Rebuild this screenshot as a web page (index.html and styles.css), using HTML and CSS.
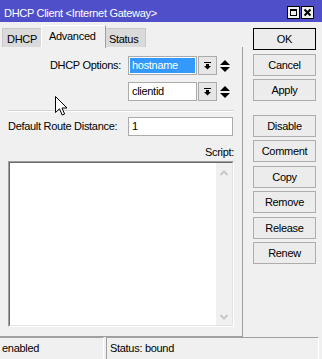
FILE: index.html
```html
<!DOCTYPE html>
<html lang="en">
<head>
<meta charset="UTF-8" />
<meta name="viewport" content="width=device-width, initial-scale=1" />
<title>DHCP Client</title>
<link rel="stylesheet" href="styles.css">
</head>
<body>
  <div class="window">
    <!-- Title bar -->
    <div class="titlebar">
      <span class="title">DHCP Client &lt;Internet Gateway&gt;</span>
      <div class="title-buttons">
        <span class="tbtn">
          <svg width="11" height="11" viewBox="0 0 11 11"><rect x="2.5" y="2.5" width="6" height="6" fill="none" stroke="#000"/><rect x="2" y="2" width="7" height="2" fill="#000"/></svg>
        </span>
        <span class="tbtn">
          <svg width="11" height="11" viewBox="0 0 11 11"><path d="M2.5 2.5 L8.5 8.5 M8.5 2.5 L2.5 8.5" stroke="#000" stroke-width="2"/></svg>
        </span>
      </div>
    </div>

    <div class="main">
      <div class="left">
        <!-- Tabs -->
        <div class="tabs">
          <div class="tab tab-dhcp">DHCP</div>
          <div class="tab tab-advanced active">Advanced</div>
          <div class="tab tab-status">Status</div>
        </div>

        <!-- Advanced tab contents -->
        <div class="panel">
          <div class="option-row">
            <span class="label">DHCP Options:</span>
            <div class="input option-input"><span class="selected">hostname</span></div>
            <span class="drop-btn">
              <svg width="7" height="8" viewBox="0 0 7 8"><rect x="0" y="0" width="7" height="1" fill="#000"/><rect x="2" y="2" width="3" height="2" fill="#000"/><polygon points="0,4 7,4 3.5,7.5" fill="#000"/></svg>
            </span>
            <span class="updown">
              <svg width="10" height="14" viewBox="0 0 10 14"><polygon points="0,6 5,1 10,6" fill="#000"/><polygon points="0,8 10,8 5,13" fill="#000"/></svg>
            </span>
          </div>

          <div class="option-row second">
            <span class="label"></span>
            <div class="input option-input"><span class="value">clientid</span></div>
            <span class="drop-btn">
              <svg width="7" height="8" viewBox="0 0 7 8"><rect x="0" y="0" width="7" height="1" fill="#000"/><rect x="2" y="2" width="3" height="2" fill="#000"/><polygon points="0,4 7,4 3.5,7.5" fill="#000"/></svg>
            </span>
            <span class="updown">
              <svg width="10" height="14" viewBox="0 0 10 14"><polygon points="0,6 5,1 10,6" fill="#000"/><polygon points="0,8 10,8 5,13" fill="#000"/></svg>
            </span>
          </div>

          <div class="separator"></div>

          <div class="distance-row">
            <span class="label">Default Route Distance:</span>
            <div class="input distance-input"><span class="value">1</span></div>
          </div>

          <div class="script-label">Script:</div>
          <div class="script-box">
            <div class="script-inner">
              <div class="script-text"></div>
              <div class="scrollbar">
                <svg width="8" height="6" viewBox="0 0 8 6"><path d="M0.5 5 L4 1.5 L7.5 5" fill="none" stroke="#c8c8c8" stroke-width="2"/></svg>
                <svg width="8" height="6" viewBox="0 0 8 6"><path d="M0.5 1 L4 4.5 L7.5 1" fill="none" stroke="#c8c8c8" stroke-width="2"/></svg>
              </div>
            </div>
          </div>
        </div>
      </div>

      <!-- Action buttons -->
      <div class="side">
        <button class="default">OK</button>
        <button>Cancel</button>
        <button>Apply</button>
        <button class="group-start">Disable</button>
        <button>Comment</button>
        <button>Copy</button>
        <button>Remove</button>
        <button>Release</button>
        <button>Renew</button>
      </div>
    </div>

    <!-- Status bar -->
    <div class="statusbar">
      <div class="cell cell-state">enabled</div>
      <div class="cell cell-status">Status: bound</div>
    </div>

    <!-- Mouse pointer -->
    <svg class="cursor" width="13" height="21" viewBox="0 0 13 21"><path d="M0.5 0.5 L0.5 16.5 L4.5 12.8 L7.2 19 L9.6 18 L7 12 L12 12 Z" fill="#fff" stroke="#000" stroke-linejoin="round"/></svg>
  </div>
</body>
</html>
```

FILE: styles.css
```css
/* Winbox style dialog */

body {
  margin: 0;
  background-color: #f0f0f0;
  font-family: "Liberation Sans", Arial, sans-serif;
  font-size: 11px;
  letter-spacing: -0.3px;
  color: #000;
}

.window {
  position: relative;
  width: 322px;
  height: 359px;
  overflow: hidden;
  background-color: #f0f0f0;
}

/* Title bar */
.titlebar {
  display: flex;
  align-items: flex-start;
  height: 22px;
  background-color: #4f4fc9;
  color: #fff;
}

.title {
  padding: 7px 0 0 4px;
  line-height: 13px;
}

.title-buttons {
  display: flex;
  gap: 1px;
  margin-left: auto;
  padding: 6px 8px 0 0;
}

.tbtn {
  display: flex;
  align-items: center;
  justify-content: center;
  width: 13px;
  height: 13px;
  box-sizing: border-box;
  border: 1px solid #000;
  background-color: #f0f0f0;
}

.main {
  display: flex;
  height: 315px;
}

.left {
  width: 243px;
}

/* Tabs */
.tabs {
  display: flex;
  align-items: flex-end;
  height: 25px;
  padding-left: 2px;
}

.tab {
  box-sizing: border-box;
  height: 19px;
  line-height: 13px;
  padding-top: 4px;
  background-color: #dadada;
  border: 1px solid #c9c9c9;
  border-bottom: none;
}

.tab-dhcp {
  width: 39px;
  padding-left: 4px;
  border-right: none;
}

.tab-advanced {
  width: 65px;
  padding-left: 7px;
}

.tab-status {
  width: 40px;
  padding-left: 3px;
  border-left: none;
}

.tab.active {
  height: 23px;
  padding-top: 4px;
  background-color: #f0f0f0;
  border-color: #fff #a0a0a0 #a0a0a0 #fff;
  position: relative;
  top: 1px;
}

/* Panel with the fields */
.panel {
  box-sizing: border-box;
  height: 290px;
  padding: 9px 8px 8px 8px;
  border-right: 1px solid #a0a0a0;
  border-bottom: 1px solid #a0a0a0;
}

.option-row,
.distance-row {
  display: flex;
  align-items: center;
  height: 19px;
}

.option-row.second {
  margin-top: 7px;
}

.label {
  box-sizing: border-box;
  width: 120px;
  padding-right: 7px;
  text-align: right;
  line-height: 13px;
}

.distance-row .label {
  text-align: left;
}

.input {
  box-sizing: border-box;
  height: 19px;
  padding: 1px;
  border: 1px solid #ababab;
  background-color: #fff;
  line-height: 15px;
}

.option-input {
  width: 69px;
}

.distance-input {
  width: 105px;
}

.selected {
  display: block;
  height: 15px;
  padding-left: 2px;
  background-color: #3399ff;
  color: #fff;
}

.value {
  padding-left: 2px;
}

.drop-btn {
  display: flex;
  align-items: center;
  justify-content: center;
  box-sizing: border-box;
  width: 19px;
  height: 19px;
  margin-left: 1px;
  border: 1px solid #ababab;
  background-color: #e6e6e6;
}

.updown {
  display: flex;
  margin-left: 3px;
}

.separator {
  margin-top: 9px;
  height: 1px;
  background-color: #d2d2d2;
  border-bottom: 1px solid #fff;
}

.distance-row {
  margin-top: 5px;
}

.script-label {
  margin-top: 10px;
  line-height: 13px;
  text-align: right;
}

/* Script text area with sunken border */
.script-box {
  margin-top: 2px;
  height: 166px;
  box-sizing: border-box;
  border: 1px solid;
  border-color: #a0a0a0 #fff #fff #a0a0a0;
}

.script-inner {
  display: flex;
  height: 100%;
  box-sizing: border-box;
  border: 1px solid;
  border-color: #696969 #e3e3e3 #e3e3e3 #696969;
  background-color: #fff;
}

.script-text {
  flex: 1;
}

.scrollbar {
  display: flex;
  flex-direction: column;
  justify-content: space-between;
  align-items: center;
  width: 16px;
  padding: 7px 0 5px 0;
  box-sizing: border-box;
  background-color: #f0f0f0;
}

/* Right column of buttons */
.side {
  display: flex;
  flex-direction: column;
  gap: 3.5px;
  padding: 6px 0 0 10px;
}

button {
  width: 63px;
  height: 22px;
  padding: 0;
  font-family: inherit;
  font-size: 11px;
  letter-spacing: -0.3px;
  color: #000;
  background-color: #ececec;
  border: 1px solid #adadad;
}

button.default {
  border-color: #000;
}

button.group-start {
  margin-top: 10px;
}

/* Status bar */
.statusbar {
  display: flex;
  gap: 2px;
  height: 22px;
}

.cell {
  box-sizing: border-box;
  height: 22px;
  padding: 4px 0 0 2px;
  line-height: 13px;
  border-top: 1px solid #a0a0a0;
  border-right: 1px solid #fff;
}

.cell-state {
  width: 104px;
}

.cell-status {
  width: 213px;
  padding-left: 3px;
  border-left: 1px solid #a0a0a0;
}

.cursor {
  position: absolute;
  left: 55px;
  top: 96px;
}
```
